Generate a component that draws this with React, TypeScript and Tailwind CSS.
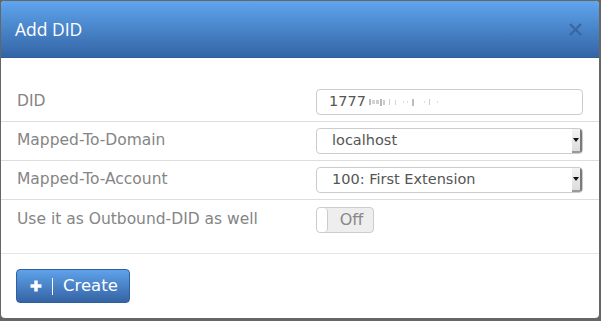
function SelectBox({ value }: { value: string }) {
  return (
    <div className="flex h-[26px] w-[267px] items-stretch overflow-hidden rounded-[4px] border border-[#cccccc] bg-white">
      <div className="flex flex-1 items-center pl-[15px] text-[14.5px] text-[#555555]">{value}</div>
      <div className="flex w-[10px] items-center justify-center border-r-2 border-b-2 border-r-[#7a7a7a] border-b-[#9a9a9a] bg-gradient-to-b from-[#f4f4f4] to-[#dcdcdc]">
        <svg width="6" height="4" viewBox="0 0 6 4">
          <path d="M0 0 L6 0 L3 4 Z" fill="#111" />
        </svg>
      </div>
    </div>
  )
}

function Row({ label, children, last }: { label: string; children: React.ReactNode; last?: boolean }) {
  return (
    <div className={`flex h-[39px] items-center ${last ? "" : "border-b border-[#dddddd]"}`}>
      <div className="w-[315px] shrink-0 pl-[16px] text-[15.5px] text-[#858585]">{label}</div>
      <div className="flex flex-1 items-center">{children}</div>
    </div>
  )
}

export default function App() {
  return (
    <div className="h-[321px] w-[601px] overflow-hidden bg-[#666666] pl-[1px] pt-[1px]" style={{ fontFamily: '"DejaVu Sans", sans-serif' }}>
      <div className="flex h-[317px] w-[598px] flex-col overflow-hidden rounded-[4px] bg-white">
        <div className="flex h-[57px] shrink-0 items-center justify-between border-b border-[#2f5d9a] bg-gradient-to-b from-[#5fa5ef] to-[#3465a5] pl-[14px] pr-[17px]">
          <span className="text-[17.5px] text-white" style={{ fontFamily: '"Open Sans", sans-serif' }}>Add DID</span>
          <svg width="13" height="13" viewBox="0 0 13 13">
            <path d="M1 1 L12 12 M12 1 L1 12" stroke="#3a67a3" strokeWidth="2.4" />
          </svg>
        </div>
        <div className="border-b border-[#e5e5e5] pt-[25px] pb-[14px]">
          <Row label="DID">
            <div className="flex h-[26px] w-[267px] items-center rounded-[4px] border border-[#cccccc] pl-[12px] text-[14.5px] text-[#555555]">
              <span>1777</span>
              <span className="ml-[3px] flex items-center gap-[1px]">
                <span className="h-[6px] w-[2px] bg-[#bdbdbd]" />
                <span className="h-[4px] w-[3px] bg-[#d4d4d4]" />
                <span className="h-[4px] w-[3px] bg-[#cfcfcf]" />
                <span className="h-[7px] w-[2px] bg-[#b8b8b8]" />
                <span className="h-[5px] w-[2px] bg-[#cccccc]" />
                <span className="ml-[3px] h-[6px] w-[1px] bg-[#cfcfcf]" />
                <span className="ml-[4px] h-[5px] w-[1px] bg-[#d4d4d4]" />
                <span className="ml-[6px] h-[2px] w-[1px] bg-[#dddddd]" />
                <span className="ml-[2px] h-[2px] w-[1px] bg-[#dddddd]" />
                <span className="ml-[3px] h-[7px] w-[2px] bg-[#bdbdbd]" />
                <span className="ml-[9px] h-[2px] w-[1px] bg-[#dddddd]" />
                <span className="ml-[3px] h-[6px] w-[1px] bg-[#cccccc]" />
                <span className="ml-[6px] h-[2px] w-[1px] bg-[#e0e0e0]" />
              </span>
            </div>
          </Row>
          <Row label="Mapped-To-Domain">
            <SelectBox value="localhost" />
          </Row>
          <Row label="Mapped-To-Account">
            <SelectBox value="100: First Extension" />
          </Row>
          <Row label="Use it as Outbound-DID as well" last>
            <div className="flex h-[26px] w-[58px] items-stretch overflow-hidden rounded-[4px] border border-[#cccccc] bg-[#eeeeee]">
              <div className="w-[11px] rounded-[4px] border-r border-[#cccccc] bg-white" />
              <div className="flex flex-1 items-center justify-center pl-[2px] text-[16px] text-[#888888]">Off</div>
            </div>
          </Row>
        </div>
        <div className="px-[15px] pt-[15px]">
          <button className="flex h-[34px] w-[114px] items-center rounded-[4px] border border-[#2e5f9f] bg-gradient-to-b from-[#5fa2eb] to-[#3564a4] pl-[13px] text-white">
            <svg width="12" height="12" viewBox="0 0 12 12">
              <path d="M6 0.5 V11.5 M0.5 6 H11.5" stroke="white" strokeWidth="3.5" />
            </svg>
            <span className="ml-[10px] h-[17px] w-px bg-white" />
            <span className="ml-[10px] text-[16.5px]">Create</span>
          </button>
        </div>
      </div>
    </div>
  )
}
